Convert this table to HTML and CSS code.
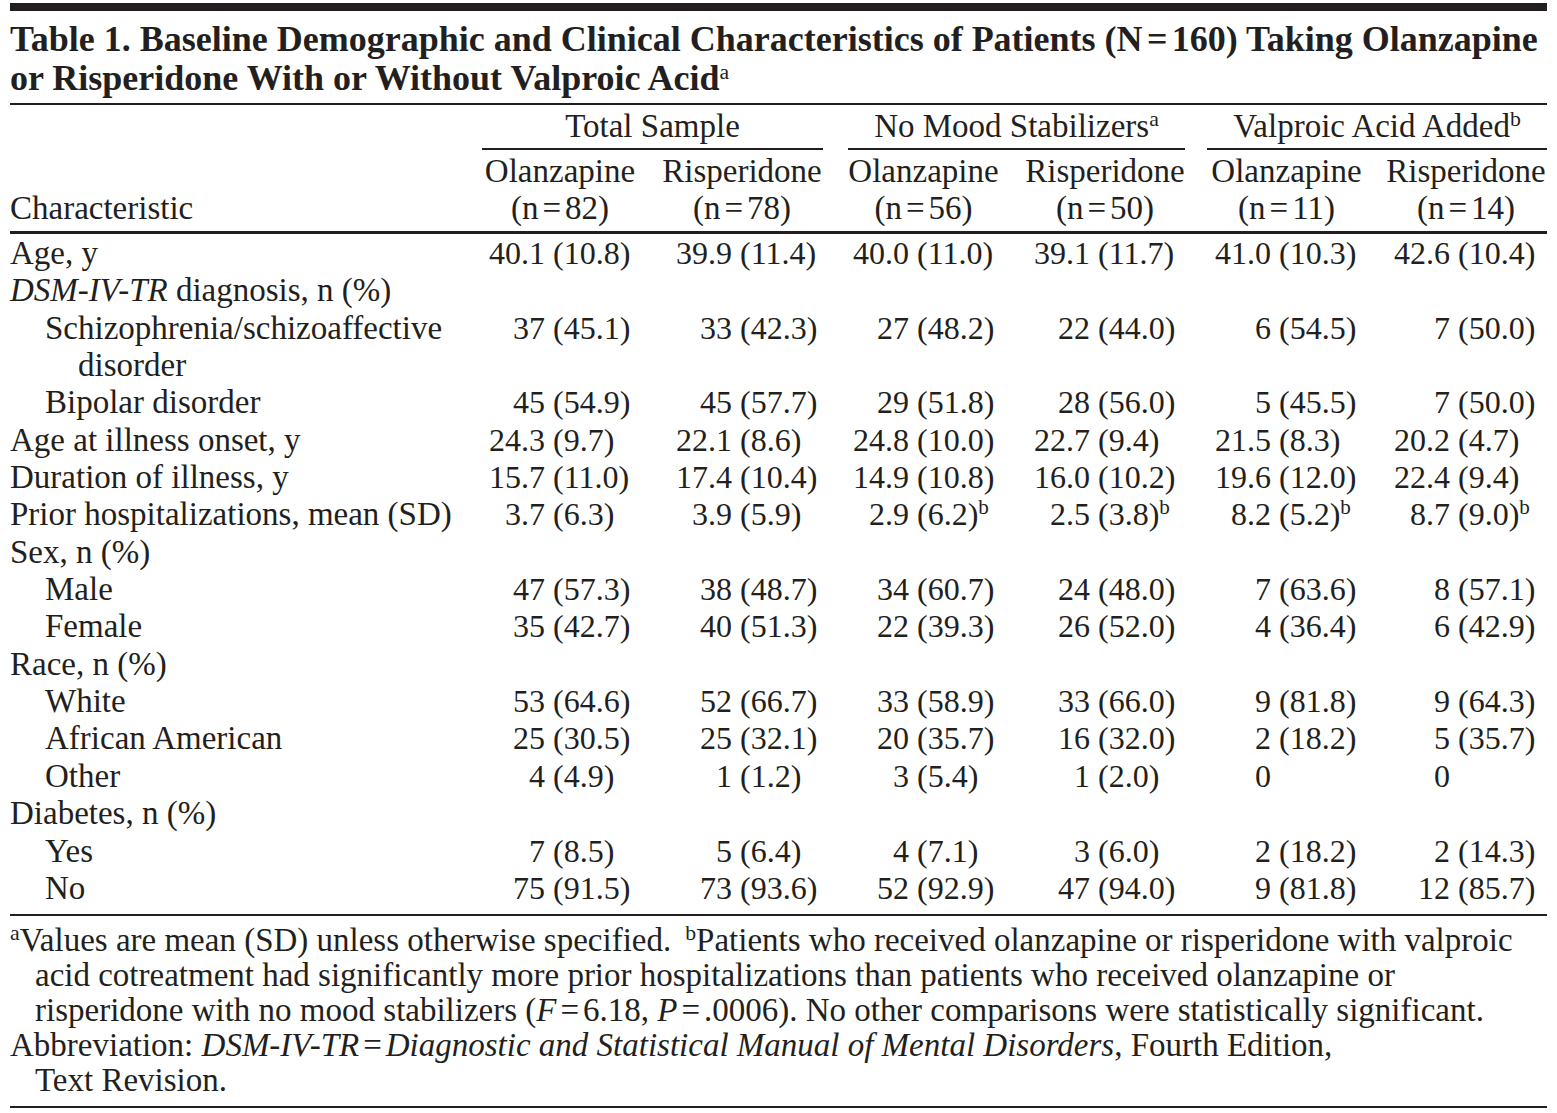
FILE: index.html
```html
<!DOCTYPE html>
<html lang="en">
<head>
<meta charset="utf-8">
<title>Table 1</title>
<link rel="stylesheet" href="styles.css">
</head>
<body>
<div class="page">
  <div class="topbar"></div>
  <h1 class="title">Table 1. Baseline Demographic and Clinical Characteristics of Patients (N<span class="eq">=</span>160) Taking Olanzapine<br>or Risperidone With or Without Valproic Acid<sup class="sup">a</sup></h1>
  <div class="rule rule-title"></div>

  <div class="groups">
    <div></div>
    <div class="group g1">Total Sample</div>
    <div class="group g2">No Mood Stabilizers<sup class="sup">a</sup></div>
    <div class="group g3">Valproic Acid Added<sup class="sup">b</sup></div>
  </div>

  <div class="heads">
    <div class="stubhead">Characteristic</div>
    <div class="head">Olanzapine<br>(n<span class="eq">=</span>82)</div>
    <div class="head">Risperidone<br>(n<span class="eq">=</span>78)</div>
    <div class="head">Olanzapine<br>(n<span class="eq">=</span>56)</div>
    <div class="head">Risperidone<br>(n<span class="eq">=</span>50)</div>
    <div class="head">Olanzapine<br>(n<span class="eq">=</span>11)</div>
    <div class="head last">Risperidone<br>(n<span class="eq">=</span>14)</div>
  </div>

  <div class="tbody">
    <div class="row">
      <div class="stub">Age, y</div>
      <div class="val"><span class="a">40.1</span><span class="b">(10.8)</span></div>
      <div class="val"><span class="a">39.9</span><span class="b">(11.4)</span></div>
      <div class="val"><span class="a">40.0</span><span class="b">(11.0)</span></div>
      <div class="val"><span class="a">39.1</span><span class="b">(11.7)</span></div>
      <div class="val"><span class="a">41.0</span><span class="b">(10.3)</span></div>
      <div class="val"><span class="a">42.6</span><span class="b">(10.4)</span></div>
    </div>
    <div class="row">
      <div class="stub full"><i>DSM-IV-TR</i> diagnosis, n (%)</div>
    </div>
    <div class="row">
      <div class="stub sub wrap">Schizophrenia/schizoaffective disorder</div>
      <div class="val"><span class="a">37</span><span class="b">(45.1)</span></div>
      <div class="val"><span class="a">33</span><span class="b">(42.3)</span></div>
      <div class="val"><span class="a">27</span><span class="b">(48.2)</span></div>
      <div class="val"><span class="a">22</span><span class="b">(44.0)</span></div>
      <div class="val"><span class="a">6</span><span class="b">(54.5)</span></div>
      <div class="val"><span class="a">7</span><span class="b">(50.0)</span></div>
    </div>
    <div class="row">
      <div class="stub sub">Bipolar disorder</div>
      <div class="val"><span class="a">45</span><span class="b">(54.9)</span></div>
      <div class="val"><span class="a">45</span><span class="b">(57.7)</span></div>
      <div class="val"><span class="a">29</span><span class="b">(51.8)</span></div>
      <div class="val"><span class="a">28</span><span class="b">(56.0)</span></div>
      <div class="val"><span class="a">5</span><span class="b">(45.5)</span></div>
      <div class="val"><span class="a">7</span><span class="b">(50.0)</span></div>
    </div>
    <div class="row">
      <div class="stub">Age at illness onset, y</div>
      <div class="val"><span class="a">24.3</span><span class="b">(9.7)</span></div>
      <div class="val"><span class="a">22.1</span><span class="b">(8.6)</span></div>
      <div class="val"><span class="a">24.8</span><span class="b">(10.0)</span></div>
      <div class="val"><span class="a">22.7</span><span class="b">(9.4)</span></div>
      <div class="val"><span class="a">21.5</span><span class="b">(8.3)</span></div>
      <div class="val"><span class="a">20.2</span><span class="b">(4.7)</span></div>
    </div>
    <div class="row">
      <div class="stub">Duration of illness, y</div>
      <div class="val"><span class="a">15.7</span><span class="b">(11.0)</span></div>
      <div class="val"><span class="a">17.4</span><span class="b">(10.4)</span></div>
      <div class="val"><span class="a">14.9</span><span class="b">(10.8)</span></div>
      <div class="val"><span class="a">16.0</span><span class="b">(10.2)</span></div>
      <div class="val"><span class="a">19.6</span><span class="b">(12.0)</span></div>
      <div class="val"><span class="a">22.4</span><span class="b">(9.4)</span></div>
    </div>
    <div class="row">
      <div class="stub">Prior hospitalizations, mean (SD)</div>
      <div class="val"><span class="a">3.7</span><span class="b">(6.3)</span></div>
      <div class="val"><span class="a">3.9</span><span class="b">(5.9)</span></div>
      <div class="val"><span class="a">2.9</span><span class="b">(6.2)<sup class="sup">b</sup></span></div>
      <div class="val"><span class="a">2.5</span><span class="b">(3.8)<sup class="sup">b</sup></span></div>
      <div class="val"><span class="a">8.2</span><span class="b">(5.2)<sup class="sup">b</sup></span></div>
      <div class="val"><span class="a">8.7</span><span class="b">(9.0)<sup class="sup">b</sup></span></div>
    </div>
    <div class="row">
      <div class="stub full">Sex, n (%)</div>
    </div>
    <div class="row">
      <div class="stub sub">Male</div>
      <div class="val"><span class="a">47</span><span class="b">(57.3)</span></div>
      <div class="val"><span class="a">38</span><span class="b">(48.7)</span></div>
      <div class="val"><span class="a">34</span><span class="b">(60.7)</span></div>
      <div class="val"><span class="a">24</span><span class="b">(48.0)</span></div>
      <div class="val"><span class="a">7</span><span class="b">(63.6)</span></div>
      <div class="val"><span class="a">8</span><span class="b">(57.1)</span></div>
    </div>
    <div class="row">
      <div class="stub sub">Female</div>
      <div class="val"><span class="a">35</span><span class="b">(42.7)</span></div>
      <div class="val"><span class="a">40</span><span class="b">(51.3)</span></div>
      <div class="val"><span class="a">22</span><span class="b">(39.3)</span></div>
      <div class="val"><span class="a">26</span><span class="b">(52.0)</span></div>
      <div class="val"><span class="a">4</span><span class="b">(36.4)</span></div>
      <div class="val"><span class="a">6</span><span class="b">(42.9)</span></div>
    </div>
    <div class="row">
      <div class="stub full">Race, n (%)</div>
    </div>
    <div class="row">
      <div class="stub sub">White</div>
      <div class="val"><span class="a">53</span><span class="b">(64.6)</span></div>
      <div class="val"><span class="a">52</span><span class="b">(66.7)</span></div>
      <div class="val"><span class="a">33</span><span class="b">(58.9)</span></div>
      <div class="val"><span class="a">33</span><span class="b">(66.0)</span></div>
      <div class="val"><span class="a">9</span><span class="b">(81.8)</span></div>
      <div class="val"><span class="a">9</span><span class="b">(64.3)</span></div>
    </div>
    <div class="row">
      <div class="stub sub">African American</div>
      <div class="val"><span class="a">25</span><span class="b">(30.5)</span></div>
      <div class="val"><span class="a">25</span><span class="b">(32.1)</span></div>
      <div class="val"><span class="a">20</span><span class="b">(35.7)</span></div>
      <div class="val"><span class="a">16</span><span class="b">(32.0)</span></div>
      <div class="val"><span class="a">2</span><span class="b">(18.2)</span></div>
      <div class="val"><span class="a">5</span><span class="b">(35.7)</span></div>
    </div>
    <div class="row">
      <div class="stub sub">Other</div>
      <div class="val"><span class="a">4</span><span class="b">(4.9)</span></div>
      <div class="val"><span class="a">1</span><span class="b">(1.2)</span></div>
      <div class="val"><span class="a">3</span><span class="b">(5.4)</span></div>
      <div class="val"><span class="a">1</span><span class="b">(2.0)</span></div>
      <div class="val"><span class="a">0</span></div>
      <div class="val"><span class="a">0</span></div>
    </div>
    <div class="row">
      <div class="stub full">Diabetes, n (%)</div>
    </div>
    <div class="row">
      <div class="stub sub">Yes</div>
      <div class="val"><span class="a">7</span><span class="b">(8.5)</span></div>
      <div class="val"><span class="a">5</span><span class="b">(6.4)</span></div>
      <div class="val"><span class="a">4</span><span class="b">(7.1)</span></div>
      <div class="val"><span class="a">3</span><span class="b">(6.0)</span></div>
      <div class="val"><span class="a">2</span><span class="b">(18.2)</span></div>
      <div class="val"><span class="a">2</span><span class="b">(14.3)</span></div>
    </div>
    <div class="row">
      <div class="stub sub">No</div>
      <div class="val"><span class="a">75</span><span class="b">(91.5)</span></div>
      <div class="val"><span class="a">73</span><span class="b">(93.6)</span></div>
      <div class="val"><span class="a">52</span><span class="b">(92.9)</span></div>
      <div class="val"><span class="a">47</span><span class="b">(94.0)</span></div>
      <div class="val"><span class="a">9</span><span class="b">(81.8)</span></div>
      <div class="val"><span class="a">12</span><span class="b">(85.7)</span></div>
    </div>
  </div>

  <div class="rule rule-bottom"></div>

  <div class="notes">
    <p class="note"><sup class="sup">a</sup>Values are mean (SD) unless otherwise specified.<span class="gap"></span><sup class="sup">b</sup>Patients who received olanzapine or risperidone with valproic<br>acid cotreatment had significantly more prior hospitalizations than patients who received olanzapine or<br>risperidone with no mood stabilizers (<i>F</i><span class="eq">=</span>6.18, <i>P</i><span class="eq">=</span>.0006). No other comparisons were statistically significant.</p>
    <p class="note">Abbreviation: <i>DSM-IV-TR</i><span class="eq">=</span><i>Diagnostic and Statistical Manual of Mental Disorders</i>, Fourth Edition,<br>Text Revision.</p>
  </div>

  <div class="rule rule-end"></div>
</div>
</body>
</html>
```

FILE: styles.css
```css
html, body {
  margin: 0;
  padding: 0;
  background: #ffffff;
}

body {
  color: #231f20;
  font-family: "Liberation Serif", "Times New Roman", serif;
}

.page {
  width: 1537px;
  margin-left: 10px;
}

.topbar {
  height: 8px;
  margin-top: 3px;
  background: #231f20;
}

.title {
  margin: 9px 0 0;
  font-size: 36px;
  font-weight: bold;
  line-height: 39px;
  white-space: nowrap;
}

.eq {
  margin: 0 0.12em;
}

.rule {
  height: 2px;
  background: #231f20;
}

.rule-title {
  margin-top: 5px;
}

.sup {
  font-size: 0.66em;
  line-height: 0;
  vertical-align: 0.5em;
}

.title .sup {
  font-size: 0.6em;
  font-weight: normal;
}

/* group headers */
.groups {
  display: grid;
  grid-template-columns: 459px 364px 363px 351px;
  margin-top: 3px;
  font-size: 33px;
  line-height: 37.4px;
}

.group {
  text-align: center;
  border-bottom: 2px solid #231f20;
  padding-bottom: 3px;
}

.g1 { margin: 0 10px 0 13px; }
.g2 { margin: 0 11px 0 15px; }
.g3 { margin: 0 0 0 11px; }

/* column headers */
.heads {
  display: grid;
  grid-template-columns: 459px 182px 182px 181px 182px 181px 170px;
  margin-top: 2.5px;
  padding-bottom: 3.3px;
  border-bottom: 3px solid #231f20;
  font-size: 33px;
  line-height: 37.4px;
}

.stubhead {
  align-self: end;
}

.head {
  text-align: center;
  white-space: nowrap;
}

.head.last {
  padding-left: 8px;
}

/* body */
.tbody {
  display: grid;
  grid-template-columns: 471px 187px 177px 181px 181px 179px 161px;
  margin-top: 1px;
  font-size: 33px;
  line-height: 37.35px;
}

.row {
  display: contents;
}

.stub {
  padding-right: 8px;
}

.stub.full {
  grid-column: 1 / -1;
}

.stub.sub {
  padding-left: 35px;
}

.stub.wrap {
  padding-left: 68px;
  text-indent: -33px;
}

.val {
  font-size: 32px;
  white-space: nowrap;
}

.val .a {
  display: inline-block;
  width: 64px;
  text-align: right;
}

.val .b {
  margin-left: 8px;
}

.rule-bottom {
  margin-top: 6.7px;
}

/* notes */
.notes {
  margin-top: 7.2px;
  font-size: 33px;
  line-height: 35.1px;
}

.note {
  margin: 0;
  padding-left: 25px;
  text-indent: -25px;
  white-space: nowrap;
}

.gap {
  display: inline-block;
  width: 14px;
}

.rule-end {
  margin-top: 7px;
}
```
